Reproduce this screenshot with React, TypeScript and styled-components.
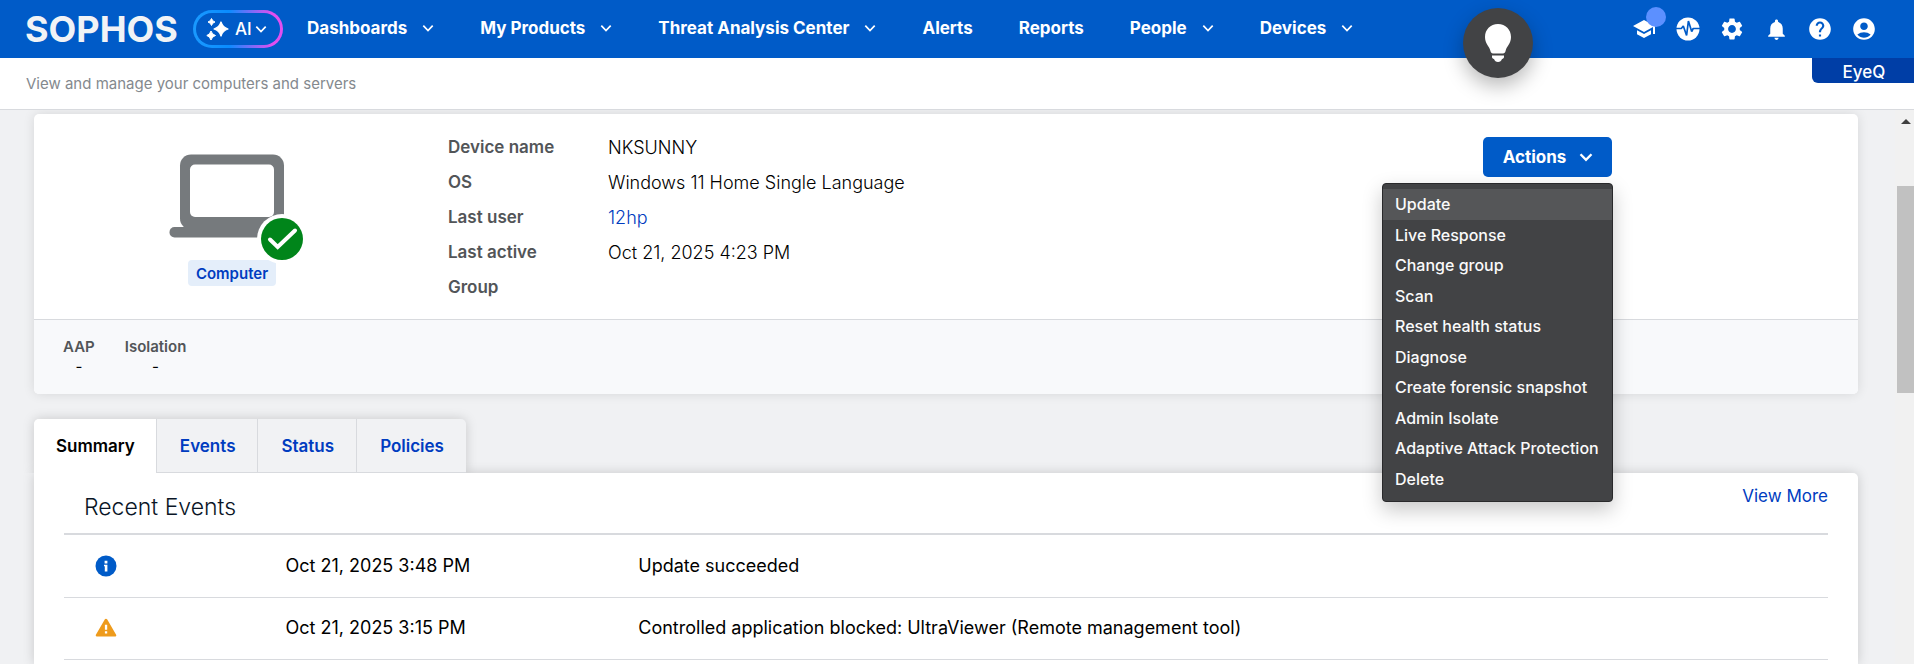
import React from "react";
import styled, { createGlobalStyle } from "styled-components";
import {
  MdAccountCircle,
  MdHelp,
  MdNotifications,
  MdSchool,
  MdSettings,
} from "react-icons/md";

const color = {
  brand: "#005bc8",
  brandDark: "#003ea6",
  link: "#003cc0",
  label: "#525558",
  line: "#d8dade",
  page: "#f0f1f3",
  dark: "#424345",
};

const GlobalStyle = createGlobalStyle`
  *, *::before, *::after { box-sizing: border-box; }
  body { margin: 0; font-family: Inter, "Liberation Sans", sans-serif; color: #000; }
  button { font: inherit; cursor: pointer; }
  h2, dl, dd, ul { margin: 0; padding: 0; }
`;

const Shell = styled.div`
  display: flex;
  flex-direction: column;
  height: 100vh;
  overflow: hidden;
  background: ${color.page};
`;

/* ---------- top bar ---------- */

const TopBar = styled.header`
  position: relative;
  display: flex;
  align-items: center;
  flex: none;
  height: 58px;
  padding: 0 37px 0 25px;
  background: ${color.brand};
  color: #fff;
`;

const Logo = styled.a`
  width: 151px;
  margin-right: 17px;
  color: #f1f3f6;
  font-size: 36px;
  font-weight: 700;
  line-height: 58px;
  text-decoration: none;
`;

const AiButton = styled.button`
  display: flex;
  align-items: center;
  gap: 6px;
  width: 90px;
  height: 38px;
  margin-right: 24px;
  padding: 0 11px 0 10px;
  border: 3px solid transparent;
  border-radius: 19px;
  background:
    linear-gradient(${color.brand}, ${color.brand}) padding-box,
    linear-gradient(90deg, #1a9aff, #0a8cff 40%, #e04ff0 88%) border-box;
  color: #fff;
  font-size: 17px;
  font-weight: 500;
`;

const AiLabel = styled.span`
  display: flex;
  align-items: center;
  gap: 3px;
`;

const Nav = styled.nav`
  display: flex;
  align-items: center;
  gap: 46px;
  padding-bottom: 2px;
`;

const NavLink = styled.a`
  display: flex;
  align-items: center;
  gap: 15px;
  color: #fff;
  font-size: 17px;
  font-weight: 700;
  line-height: 24px;
  text-decoration: none;
  white-space: nowrap;
`;

const Tools = styled.div`
  display: flex;
  gap: 18px;
  margin-left: auto;
`;

const ToolButton = styled.button`
  position: relative;
  display: grid;
  place-items: center;
  width: 26px;
  height: 26px;
  padding: 0;
  border: 0;
  background: none;
  color: #fff;
`;

const Dot = styled.span`
  position: absolute;
  top: -9px;
  left: 15px;
  width: 20px;
  height: 20px;
  border-radius: 50%;
  background: #5c90ff;
`;

const TipButton = styled.button`
  position: absolute;
  z-index: 2;
  top: 8px;
  right: 381px;
  display: grid;
  place-items: center;
  width: 70px;
  height: 70px;
  padding: 0;
  border: 0;
  border-radius: 50%;
  background: ${color.dark};
  box-shadow: 0 8px 20px rgba(0, 0, 0, 0.28);
`;

/* ---------- strip under the bar ---------- */

const Strip = styled.div`
  display: flex;
  align-items: flex-start;
  justify-content: space-between;
  flex: none;
  height: 52px;
  border-bottom: 1px solid ${color.line};
  background: #fff;
`;

const Subtitle = styled.p`
  margin: 0;
  padding-left: 26px;
  color: #84898e;
  font-size: 15px;
  line-height: 51px;
`;

const TenantTab = styled.button`
  width: 102px;
  height: 25px;
  padding: 3px 0 0 2px;
  border: 0;
  border-radius: 0 0 0 6px;
  background: ${color.brandDark};
  color: #fff;
  font-size: 17px;
  font-weight: 500;
  line-height: 22px;
`;

/* ---------- scrolled area ---------- */

const Body = styled.div`
  display: flex;
  flex: 1;
  min-height: 0;
  overflow: hidden;
`;

const Content = styled.main`
  display: flex;
  flex: 1;
  flex-direction: column;
  min-width: 0;
  padding: 4px 37px 0 34px;
`;

const ScrollTrack = styled.div`
  display: flex;
  flex: none;
  flex-direction: column;
  align-items: center;
  gap: 62px;
  width: 19px;
  padding: 9px 0 0 2px;
  background: #f1f1f1;
`;

const ScrollThumb = styled.div`
  width: 100%;
  height: 207px;
  background: #c1c1c1;
`;

/* ---------- device card ---------- */

const Card = styled.section`
  border-radius: 5px;
  background: #fff;
  box-shadow: 0 0 12px rgba(0, 0, 0, 0.11);
`;

const CardMain = styled.div`
  display: flex;
  height: 205px;
`;

const DeviceFigure = styled.div`
  display: flex;
  flex-direction: column;
  align-items: center;
  width: 396px;
  padding-top: 40px;

  svg {
    position: relative;
    z-index: 1;
    overflow: visible;
  }
`;

const TypeBadge = styled.span`
  padding: 1px 8px 0;
  border-radius: 4px;
  background: #e4eefa;
  color: ${color.link};
  font-size: 15px;
  font-weight: 600;
  line-height: 25px;
`;

const Facts = styled.dl`
  display: grid;
  flex: 1;
  grid-template-columns: 160px 1fr;
  align-content: start;
  padding: 16px 0 0 18px;
  line-height: 35px;
`;

const Term = styled.dt`
  color: ${color.label};
  font-size: 17px;
  font-weight: 600;
`;

const Value = styled.dd`
  font-size: 18px;
  font-weight: 300;
`;

const Link = styled.a`
  color: ${color.link};
  text-decoration: none;
`;

const ActionsArea = styled.div`
  position: relative;
  align-self: flex-start;
  margin: 23px 246px 0 0;
`;

const ActionsButton = styled.button`
  display: flex;
  align-items: center;
  justify-content: center;
  gap: 13px;
  width: 129px;
  height: 40px;
  padding: 0 0 1px 1px;
  border: 0;
  border-radius: 5px;
  background: ${color.brand};
  color: #fff;
  font-size: 17px;
  font-weight: 700;
`;

const Menu = styled.ul`
  position: absolute;
  z-index: 3;
  top: 46px;
  right: -1px;
  display: grid;
  grid-auto-rows: 1fr;
  width: 231px;
  height: 319px;
  padding: 5px 0 7px;
  border: 1px solid #29292b;
  border-radius: 4px;
  background: ${color.dark};
  box-shadow: 0 8px 20px rgba(0, 0, 0, 0.22);
  list-style: none;
`;

const MenuItem = styled.button<{ $active?: boolean }>`
  width: 100%;
  height: 100%;
  padding: 0 0 0 12px;
  border: 0;
  background: ${(p) => (p.$active ? "#555658" : "transparent")};
  color: #fafafa;
  font-size: 16px;
  font-weight: 500;
  line-height: 24px;
  text-align: left;
  white-space: nowrap;
`;

const CardFooter = styled.div`
  display: flex;
  gap: 30px;
  height: 75px;
  padding: 17px 29px 0;
  border-top: 1px solid ${color.line};
  border-radius: 0 0 5px 5px;
  background: #f8f9fb;
`;

const State = styled.div`
  display: flex;
  flex-direction: column;
  align-items: center;
  font-size: 15px;
  line-height: 20px;
`;

const StateName = styled.span`
  color: ${color.label};
  font-weight: 600;
`;

/* ---------- tabs and events ---------- */

const TabbedArea = styled.div`
  display: flex;
  flex: 1;
  flex-direction: column;
`;

const Tabs = styled.div`
  position: relative;
  z-index: 1;
  display: flex;
  align-self: flex-start;
  height: 54px;
  margin-top: 25px;
  border-radius: 5px 5px 0 0;
  background: #f1f2f4;
  box-shadow: 0 0 12px rgba(0, 0, 0, 0.17);
  clip-path: inset(-12px -12px 0 -12px);
`;

const Tab = styled.button<{ $active?: boolean }>`
  padding: ${(p) => (p.$active ? "0 21px 0 22px" : "0 22px 0 23px")};
  border: solid ${color.line};
  border-width: ${(p) => (p.$active ? "0" : "0 0 1px 1px")};
  border-radius: ${(p) => (p.$active ? "5px 0 0 0" : "0")};
  background: ${(p) => (p.$active ? "#fff" : "transparent")};
  color: ${(p) => (p.$active ? "#000" : color.link)};
  font-size: 17px;
  font-weight: 600;
`;

const Panel = styled.section`
  flex: 1;
  padding: 0 30px;
  border-radius: 0 5px 0 0;
  background: #fff;
  box-shadow: 0 0 12px rgba(0, 0, 0, 0.17);
`;

const PanelHeader = styled.div`
  display: flex;
  align-items: flex-start;
  justify-content: space-between;
  padding: 0 0 12px 20px;
  border-bottom: 2px solid ${color.line};
`;

const PanelTitle = styled.h2`
  padding-top: 20px;
  color: #0a1526;
  font-size: 23px;
  font-weight: 300;
  line-height: 28px;
`;

const MoreLink = styled(Link)`
  padding-top: 11px;
  font-size: 17px;
  line-height: 24px;
`;

const Events = styled.table`
  width: 100%;
  border-collapse: collapse;
  table-layout: fixed;
`;

const EventRow = styled.tr`
  height: 62px;
  border-bottom: 1px solid ${color.line};
`;

const EventCell = styled.td<{ $width?: string }>`
  width: ${(p) => p.$width ?? "auto"};
  padding: 0 0 0 1px;
  font-size: 18px;
  line-height: 24px;
`;

const EventIcon = styled.span`
  display: flex;
  padding-left: 30px;
`;

/* ---------- drawings ---------- */

function Chevron({ size = 12, weight = 1.7 }: { size?: number; weight?: number }) {
  return (
    <svg width={size} height={size} viewBox="0 0 12 12" fill="none" aria-hidden="true">
      <path d="M1.3 3.6 6 8.5l4.7-4.900" stroke="currentColor" strokeWidth={weight} />
    </svg>
  );
}

function Sparkles() {
  return (
    <svg width="23" height="24" viewBox="0 0 23 24" fill="#fff" aria-hidden="true">
      <path d="M15 5Q16.600 10.400 22 12 16.600 13.600 15 19 13.400 13.600 8 12 13.400 10.400 15 5Z" stroke="#fff" strokeWidth="1.300" strokeLinejoin="round" />
      <path d="M5.500 1.500Q6.300 4.300 9 5 6.300 5.700 5.500 8.500 4.700 5.700 2 5 4.700 4.300 5.500 1.500Z" stroke="#fff" strokeLinejoin="round" />
      <path d="M5 14Q6 17.500 9.500 18.500 6 19.500 5 23 4 19.500.8 18.500 4 17.500 5 14Z" stroke="#fff" strokeLinejoin="round" />
    </svg>
  );
}

function Pulse() {
  return (
    <svg width="24" height="24" viewBox="0 0 24 24" fill="none" aria-hidden="true">
      <circle cx="12" cy="12" r="11.500" fill="#fff" />
      <path
        d="M0 11.500h5.300l2-2.500 3.300 9.500 1.800-14.500 3.300 10.500 1.500-3H24"
        stroke={color.brand}
        strokeWidth="1.700"
        strokeLinejoin="bevel"
      />
    </svg>
  );
}

function Bulb() {
  return (
    <svg width="28" height="38" viewBox="0 0 28 38" fill="#fff" aria-hidden="true">
      <path d="M14 0C6.300 0 1 5.600 1 13c0 6.500 4 8.800 5.300 13.500.6 2.200 1.200 3 2.700 3h10c1.500 0 2.100-.8 2.700-3C23 21.800 27 19.500 27 13 27 5.600 21.700 0 14 0Z" />
      <path d="M8 31.500h12v1.200c0 1.300-.8 2.200-2 2.400C17.300 37 16 38 14 38s-3.300-1-4-2.900c-1.200-.2-2-1.100-2-2.400Z" />
    </svg>
  );
}

function Laptop() {
  return (
    <svg width="142" height="106" viewBox="0 0 142 106" role="img" aria-label="Healthy computer">
      <rect x="19" y="0.500" width="104" height="75" rx="11" fill="#767a7d" />
      <rect x="8.500" y="73" width="126" height="10.500" rx="5" fill="#767a7d" />
      <rect x="29" y="10.500" width="84" height="52.500" rx="5" fill="#fff" />
      <circle cx="121" cy="85" r="25" fill="#fff" />
      <circle cx="121" cy="85" r="21" fill="#00851a" />
      <path d="m109 85.500 7.700 7.500L134 76.500" fill="none" stroke="#fff" strokeWidth="4" strokeLinecap="round" />
    </svg>
  );
}

function InfoIcon() {
  return (
    <svg width="22" height="22" viewBox="0 0 22 22" role="img" aria-label="Information">
      <circle cx="11" cy="11" r="10.500" fill={color.brand} />
      <path d="M9.600 5.800h2.800v2.600H9.600ZM9 9.700h3.400v6.700H9.800v-5.200H9Z" fill="#fff" />
    </svg>
  );
}

function WarningIcon() {
  return (
    <svg width="22" height="20" viewBox="0 0 22 20" role="img" aria-label="Warning">
      <path d="M11 2 20 17.300H2Z" fill="#ee9b1c" stroke="#ee9b1c" strokeWidth="2.600" strokeLinejoin="round" />
      <path d="M9.900 6.800h2.300v5H9.900ZM9.900 13.300h2.300v2.300H9.900Z" fill="#fff" />
    </svg>
  );
}

/* ---------- data ---------- */

const navItems = [
  { label: "Dashboards", menu: true },
  { label: "My Products", menu: true },
  { label: "Threat Analysis Center", menu: true },
  { label: "Alerts", menu: false },
  { label: "Reports", menu: false },
  { label: "People", menu: true },
  { label: "Devices", menu: true },
];

const actions = [
  "Update",
  "Live Response",
  "Change group",
  "Scan",
  "Reset health status",
  "Diagnose",
  "Create forensic snapshot",
  "Admin Isolate",
  "Adaptive Attack Protection",
  "Delete",
];

const facts: [string, React.ReactNode][] = [
  ["Device name", "NKSUNNY"],
  ["OS", "Windows 11 Home Single Language"],
  ["Last user", <Link href="#user">12hp</Link>],
  ["Last active", "Oct 21, 2025 4:23 PM"],
  ["Group", ""],
];

const events = [
  { icon: <InfoIcon />, time: "Oct 21, 2025 3:48 PM", text: "Update succeeded" },
  {
    icon: <WarningIcon />,
    time: "Oct 21, 2025 3:15 PM",
    text: "Controlled application blocked: UltraViewer (Remote management tool)",
  },
];

export default function App() {
  return (
    <Shell>
      <GlobalStyle />
      <TopBar>
        <Logo href="#home">SOPHOS</Logo>
        <AiButton>
          <Sparkles />
          <AiLabel>
            AI
            <Chevron />
          </AiLabel>
        </AiButton>
        <Nav>
          {navItems.map((item) => (
            <NavLink key={item.label} href={`#${item.label}`}>
              {item.label}
              {item.menu && <Chevron />}
            </NavLink>
          ))}
        </Nav>
        <Tools>
          <ToolButton aria-label="Training">
            <MdSchool size={24} />
            <Dot />
          </ToolButton>
          <ToolButton aria-label="System health">
            <Pulse />
          </ToolButton>
          <ToolButton aria-label="Settings">
            <MdSettings size={26} />
          </ToolButton>
          <ToolButton aria-label="Notifications">
            <MdNotifications size={25} />
          </ToolButton>
          <ToolButton aria-label="Help">
            <MdHelp size={26} />
          </ToolButton>
          <ToolButton aria-label="Account">
            <MdAccountCircle size={26} />
          </ToolButton>
        </Tools>
        <TipButton aria-label="Tips">
          <Bulb />
        </TipButton>
      </TopBar>

      <Strip>
        <Subtitle>View and manage your computers and servers</Subtitle>
        <TenantTab>EyeQ</TenantTab>
      </Strip>

      <Body>
        <Content>
          <Card>
            <CardMain>
              <DeviceFigure>
                <Laptop />
                <TypeBadge>Computer</TypeBadge>
              </DeviceFigure>
              <Facts>
                {facts.map(([term, value]) => (
                  <React.Fragment key={term}>
                    <Term>{term}</Term>
                    <Value>{value}</Value>
                  </React.Fragment>
                ))}
              </Facts>
              <ActionsArea>
                <ActionsButton aria-haspopup="menu" aria-expanded="true">
                  Actions
                  <Chevron size={14} weight={2} />
                </ActionsButton>
                <Menu>
                  {actions.map((action, i) => (
                    <li key={action}>
                      <MenuItem $active={i === 0}>{action}</MenuItem>
                    </li>
                  ))}
                </Menu>
              </ActionsArea>
            </CardMain>
            <CardFooter>
              <State>
                <StateName>AAP</StateName>
                <span>-</span>
              </State>
              <State>
                <StateName>Isolation</StateName>
                <span>-</span>
              </State>
            </CardFooter>
          </Card>

          <TabbedArea>
            <Tabs role="tablist">
              {["Summary", "Events", "Status", "Policies"].map((tab, i) => (
                <Tab key={tab} role="tab" aria-selected={i === 0} $active={i === 0}>
                  {tab}
                </Tab>
              ))}
            </Tabs>
            <Panel>
              <PanelHeader>
                <PanelTitle>Recent Events</PanelTitle>
                <MoreLink href="#events">View More</MoreLink>
              </PanelHeader>
              <Events>
                <tbody>
                  {events.map((event) => (
                    <EventRow key={event.time}>
                      <EventCell $width="12.5%">
                        <EventIcon>{event.icon}</EventIcon>
                      </EventCell>
                      <EventCell $width="20%">{event.time}</EventCell>
                      <EventCell>{event.text}</EventCell>
                    </EventRow>
                  ))}
                </tbody>
              </Events>
            </Panel>
          </TabbedArea>
        </Content>
        <ScrollTrack aria-hidden="true">
          <svg width="10" height="5" viewBox="0 0 10 5">
            <path d="M5 0l5 5H0Z" fill="#404040" />
          </svg>
          <ScrollThumb />
        </ScrollTrack>
      </Body>
    </Shell>
  );
}
